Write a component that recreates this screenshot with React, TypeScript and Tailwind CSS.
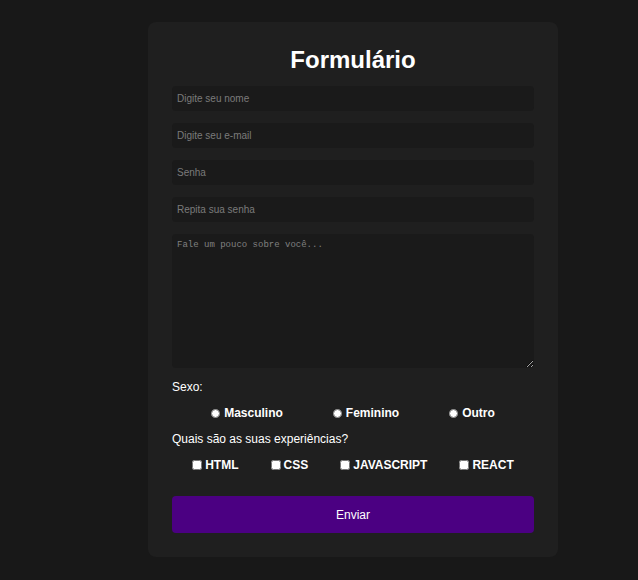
import React from "react";

const fields = [
  { type: "text", placeholder: "Digite seu nome" },
  { type: "email", placeholder: "Digite seu e-mail" },
  { type: "password", placeholder: "Senha" },
  { type: "password", placeholder: "Repita sua senha" },
];

const genders = ["Masculino", "Feminino", "Outro"];
const skills = ["HTML", "CSS", "JAVASCRIPT", "REACT"];

export default function App() {
  return (
    <div className="min-h-[580px] w-full bg-[#181818] pt-[22px] pl-[148px] font-['Liberation_Sans',Arial,sans-serif] text-white">
      <div className="w-[410px] rounded-lg bg-[#1f1f1f] px-6 pt-6 pb-6">
        <h2 className="mb-3 text-center text-[24px] leading-[28px] font-bold">
          Formulário
        </h2>
        <form className="flex flex-col gap-3" onSubmit={(e) => e.preventDefault()}>
          {fields.map((f) => (
            <input
              key={f.placeholder}
              type={f.type}
              placeholder={f.placeholder}
              className="h-[25px] w-full rounded bg-[#1a1a1a] px-[5px] text-[10px] text-white outline-none placeholder:text-[#7a7a7a]"
            />
          ))}
          <textarea
            placeholder="Fale um pouco sobre você..."
            className="h-[134px] w-full rounded bg-[#1a1a1a] px-[5px] py-[5px] font-['Liberation_Mono',monospace] text-[9px] text-white outline-none placeholder:text-[#808080]"
          />
          <p className="text-[12px] leading-[14px]">Sexo:</p>
          <div className="flex justify-center gap-[50px] text-[12px] leading-[14px] font-bold">
            {genders.map((g) => (
              <label key={g} className="flex items-center gap-1">
                <input type="radio" name="sexo" className="m-0 h-[9px] w-[9px]" />
                {g}
              </label>
            ))}
          </div>
          <p className="text-[12px] leading-[14px]">Quais são as suas experiências?</p>
          <div className="flex justify-center gap-8 text-[12px] leading-[14px] font-bold">
            {skills.map((s) => (
              <label key={s} className="flex items-center gap-[3px]">
                <input type="checkbox" className="m-0 h-[10px] w-[10px]" />
                {s}
              </label>
            ))}
          </div>
          <button
            type="submit"
            className="mt-3 h-[37px] w-full rounded bg-[#4b0082] text-[12px] text-white"
          >
            Enviar
          </button>
        </form>
      </div>
    </div>
  );
}
